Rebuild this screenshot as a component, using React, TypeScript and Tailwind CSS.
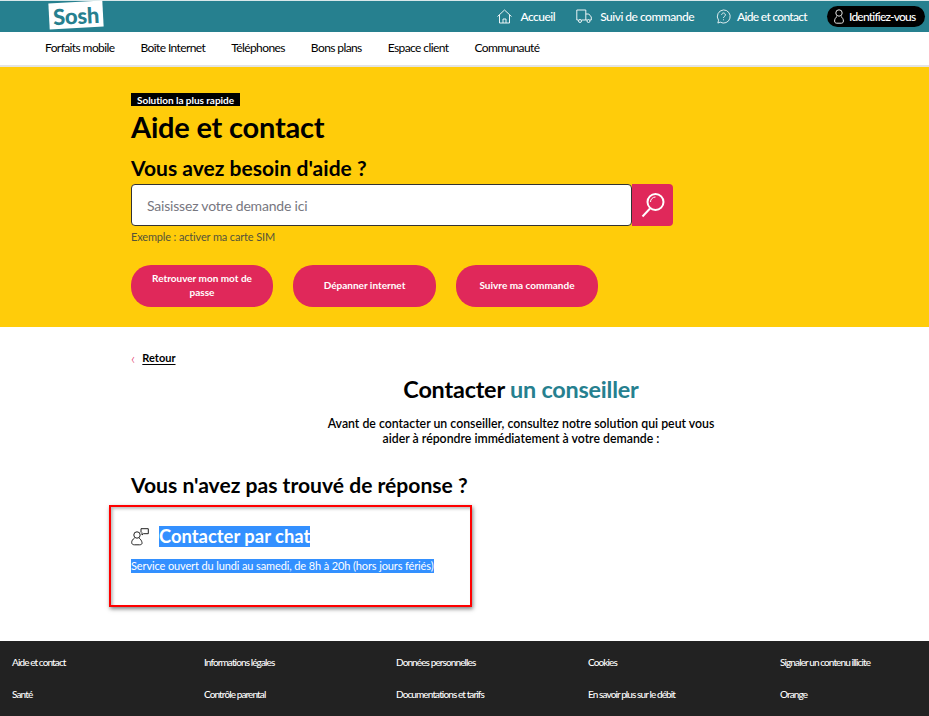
import React from "react";

const F = { fontFamily: "Lato, 'Open Sans', sans-serif" };

function Home() {
  return (
    <svg width="15" height="15" viewBox="0 0 15 15" fill="none" stroke="white" strokeWidth="0.9">
      <path d="M.5 7.500 7.500 1 14.500 7.500M2.500 6v8h10V6M6 14v-4h3v4" />
    </svg>
  );
}
function Truck() {
  return (
    <svg width="16" height="15" viewBox="0 0 16 15" fill="none" stroke="white" strokeWidth="0.9">
      <path d="M2.500 11H.8V1h9v10H5.500M9.800 5h3l2.500 3v3H14M9.800 11H11" />
      <circle cx="4" cy="12" r="1.500" /><circle cx="12.500" cy="12" r="1.500" />
    </svg>
  );
}
function Help() {
  return (
    <svg width="15" height="15" viewBox="0 0 16 16" fill="none" stroke="white" strokeWidth="0.9">
      <path d="M8 1a7 7 0 1 1-3.500 13L2 15l.7-3A7 7 0 0 1 8 1Z" />
      <path d="M6 6.200a2 2 0 1 1 3 1.800c-.7.400-1 .8-1 1.600M8 11v1" />
    </svg>
  );
}
function User() {
  return (
    <svg width="10" height="15" viewBox="0 0 10 15" fill="none" stroke="white" strokeWidth="0.9">
      <circle cx="5" cy="4" r="3.200" />
      <path d="M3 7.500C1.500 8.500.6 10.300.6 12c0 1.500.9 2.200 2 2.200h4.800c1.100 0 2-.7 2-2.200 0-1.700-.9-3.500-2.400-4.500" />
    </svg>
  );
}
function Search() {
  return (
    <svg width="24" height="26" viewBox="0 0 24 26" fill="none" stroke="white">
      <path d="M1.500 24.500 9 16.500" strokeWidth="2" />
      <circle cx="14.500" cy="10" r="8" strokeWidth="2" />
      <path d="M9.500 10a5 5 0 0 1 5-5" strokeWidth="1" />
    </svg>
  );
}
function ChatIcon() {
  return (
    <svg width="18" height="18" viewBox="0 0 18 18" fill="none" strokeWidth="1">
      <circle cx="6" cy="7" r="3.200" stroke="#222" />
      <path d="M3.500 10.200C1.500 11.200.7 13 .7 14.500c0 1.500 1 2.300 2.800 2.300h5c1.800 0 2.800-.8 2.500-2.300-.3-1.500-1.200-3.200-2.800-4.300" stroke="#222" />
      <path d="M10 4.500V.7h7.300v5H12.500L11 7V4.500" stroke="#222" />
    </svg>
  );
}

const footer = [
  ["Aide et contact", "Santé"],
  ["Informations légales", "Contrôle parental"],
  ["Données personnelles", "Documentations et tarifs"],
  ["Cookies", "En savoir plus sur le débit"],
  ["Signaler un contenu illicite", "Orange"],
];

export default function App() {
  return (
    <div className="w-[929px] h-[716px] overflow-hidden bg-white text-black" style={F}>
      <header className="h-[32px] bg-[#26808f] border-t border-[#d8e8ea] flex items-center relative">
        <div className="absolute left-[49px] top-[1px] w-[54px] h-[26px] bg-white -rotate-3 flex items-center justify-center text-[#26808f] text-[22px] font-black tracking-[-0.3px]">
          Sosh
        </div>
        <nav className="ml-auto flex items-center text-white text-[12px] tracking-[-0.5px] font-medium whitespace-nowrap">
          <span className="flex items-center gap-[8px] mr-[21px]"><Home />Accueil</span>
          <span className="flex items-center gap-[8px] mr-[22px]"><Truck />Suivi de commande</span>
          <span className="flex items-center gap-[6px] mr-[20px] tracking-[-0.7px]"><Help />Aide et contact</span>
          <span className="flex items-center gap-[5px] h-[21px] w-[98px] pl-[7px] mr-[4px] rounded-full bg-black tracking-[-0.8px]"><User />Identifiez-vous</span>
        </nav>
      </header>

      <nav className="h-[35px] bg-white border-b-2 border-[#e4e4e4] flex items-center pl-[45px] pb-[2px] gap-[26px] text-[12px] tracking-[-0.6px]">
        <span>Forfaits mobile</span>
        <span>Boîte Internet</span>
        <span>Téléphones</span>
        <span>Bons plans</span>
        <span>Espace client</span>
        <span>Communauté</span>
      </nav>

      <section className="h-[260px] bg-[#ffcc0a] pl-[131px] pt-[26px]">
        <div className="w-[109px] h-[13px] bg-black text-white text-[10px] font-bold flex items-center justify-center leading-none tracking-[-0.05px]">
          Solution la plus rapide
        </div>
        <h1 className="mt-[2px] text-[29px] leading-[38px] font-bold tracking-[-0.2px]">Aide et contact</h1>
        <h2 className="mt-[9px] text-[21px] leading-[26px] font-bold tracking-[0.03px]">Vous avez besoin d'aide ?</h2>
        <div className="mt-[3px] flex w-[542px] h-[42px]">
          <div className="w-[501px] bg-white border border-[#333] rounded-[4px] pl-[15px] flex items-center text-[14px] text-[#77777f] tracking-[-0.2px]">
            Saisissez votre demande ici
          </div>
          <div className="w-[41px] bg-[#e0285a] rounded-r-[4px] flex items-center justify-center"><Search /></div>
        </div>
        <p className="mt-[4px] text-[11px] leading-[14px] text-[#55543a] tracking-[-0.15px]">Exemple : activer ma carte SIM</p>
        <div className="mt-[21px] flex gap-[20px] text-white text-[10px] leading-[14px] font-bold text-center">
          <button className="w-[142px] h-[42px] rounded-[20px] bg-[#e0285a] px-[16px] pb-[2px] font-bold">Retrouver mon mot de passe</button>
          <button className="w-[143px] h-[42px] rounded-[20px] bg-[#e0285a] pb-[2px] font-bold">Dépanner internet</button>
          <button className="w-[142px] h-[42px] rounded-[20px] bg-[#e0285a] pb-[2px] font-bold">Suivre ma commande</button>
        </div>
      </section>

      <main className="h-[314px] pl-[131px] pt-[24px] flex flex-col">
        <div className="flex items-center gap-[7px] text-[11px] leading-[14px]">
          <span className="text-[#e0285a] text-[16px] leading-[14px] font-light">‹</span>
          <span className="font-bold underline underline-offset-2">Retour</span>
        </div>
        <h2 className="mt-[9px] w-[780px] text-center text-[23.400px] leading-[30px] font-bold tracking-[-0.2px]">
          Contacter <span className="text-[#26808f]">un conseiller</span>
        </h2>
        <p className="mt-[12px] w-[780px] text-center text-[12.300px] leading-[15px] font-semibold">
          Avant de contacter un conseiller, consultez notre solution qui peut vous<br />
          aider à répondre immédiatement à votre demande :
        </p>
        <h2 className="mt-[26px] text-[21.100px] leading-[26px] font-bold">Vous n'avez pas trouvé de réponse ?</h2>
        <div className="mt-[7px] -ml-[22px] w-[363px] h-[102px] border-2 border-[#f00] shadow-[1px_2px_4px_rgba(0,0,0,0.5),inset_2px_2px_3px_rgba(0,0,0,0.25)] pl-[20px] pt-[19px]">
          <div className="flex items-center gap-[10px]">
            <ChatIcon />
            <span className="bg-[#3390ff] text-white text-[18.400px] leading-[21px] font-bold">Contacter par chat</span>
          </div>
          <div className="mt-[12px]">
            <span className="bg-[#3390ff] text-white text-[11px] leading-[14px] block w-fit tracking-[-0.12px]">Service ouvert du lundi au samedi, de 8h à 20h (hors jours fériés)</span>
          </div>
        </div>
      </main>

      <footer className="h-[75px] bg-[#222222] text-white text-[10px] tracking-[-0.9px] pl-[12px] pt-[14px] grid grid-cols-[192px_192px_192px_192px_1fr] grid-rows-[14px_14px] gap-y-[18px] font-medium">
        {footer[0].map((_, r) => footer.map((c, i) => <span key={`${r}-${i}`} className="leading-[14px]">{c[r]}</span>))}
      </footer>
    </div>
  );
}
